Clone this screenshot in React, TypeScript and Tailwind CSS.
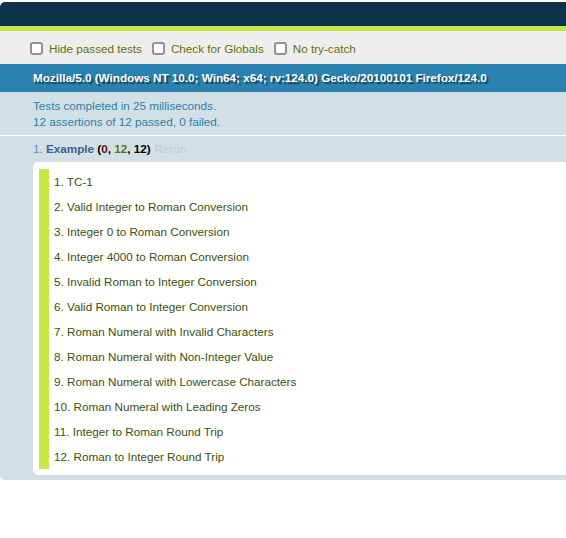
import React from 'react';

const tests = [
  'TC-1',
  'Valid Integer to Roman Conversion',
  'Integer 0 to Roman Conversion',
  'Integer 4000 to Roman Conversion',
  'Invalid Roman to Integer Conversion',
  'Valid Roman to Integer Conversion',
  'Roman Numeral with Invalid Characters',
  'Roman Numeral with Non-Integer Value',
  'Roman Numeral with Lowercase Characters',
  'Roman Numeral with Leading Zeros',
  'Integer to Roman Round Trip',
  'Roman to Integer Round Trip',
];

const Check: React.FC<{ label: string }> = ({ label }) => (
  <label className="flex items-center mr-[10px]">
    <span className="w-[13px] h-[13px] rounded-[3px] border-2 border-[#8f8f9d] bg-white mr-[6px]" />
    <span>{label}</span>
  </label>
);

const App: React.FC = () => {
  return (
    <div className="w-full min-h-[538px] bg-white overflow-hidden pt-[2px] font-['Liberation_Sans',Arial,sans-serif] text-[11.7px]">
      <div className="w-[640px]">
        <div className="h-[24px] bg-[#0d3349] rounded-tl-[5px]" />
        <div className="h-[5px] bg-[#c6e746]" />
        <div className="h-[33px] bg-[#eeeeee] text-[#5e740b] flex items-center pl-[30px] pt-[2px]">
          <Check label="Hide passed tests" />
          <Check label="Check for Globals" />
          <Check label="No try-catch" />
        </div>
        <div className="h-[28px] bg-[#2b81af] text-white font-bold flex items-center pl-[33px] [text-shadow:2px_2px_1px_rgba(0,0,0,0.5)]">
          Mozilla/5.0 (Windows NT 10.0; Win64; x64; rv:124.0) Gecko/20100101 Firefox/124.0
        </div>
        <div className="h-[44px] bg-[#d2e0e6] text-[#2b81af] pl-[33px] pt-[6px] leading-[16px] border-b border-white">
          <div>Tests completed in 25 milliseconds.</div>
          <div>12 assertions of 12 passed, 0 failed.</div>
        </div>
        <div className="bg-[#d2e0e6] rounded-bl-[5px] pl-[33px] pt-[5px] pb-[5px]">
          <div className="leading-[16px]">
            <span className="text-[#528ce0]">1. </span>
            <strong className="text-[#366097]">Example </strong>
            <b className="text-black">
              (<span className="text-[#710909]">0</span>, <span className="text-[#5e740b]">12</span>, 12)
            </b>
            <span className="text-[#c2ccd1] ml-[4px]">Rerun</span>
          </div>
          <ol className="mt-[5px] bg-white rounded-l-[5px] pl-[6px] pt-[7px] pb-[6px]">
            {tests.map((name, i) => (
              <li
                key={i}
                className="h-[25px] flex items-center border-l-[10px] border-[#c6e746] pl-[5px] text-[#3c510c]"
              >
                {i + 1}. {name}
              </li>
            ))}
          </ol>
        </div>
      </div>
    </div>
  );
};

export default App;
